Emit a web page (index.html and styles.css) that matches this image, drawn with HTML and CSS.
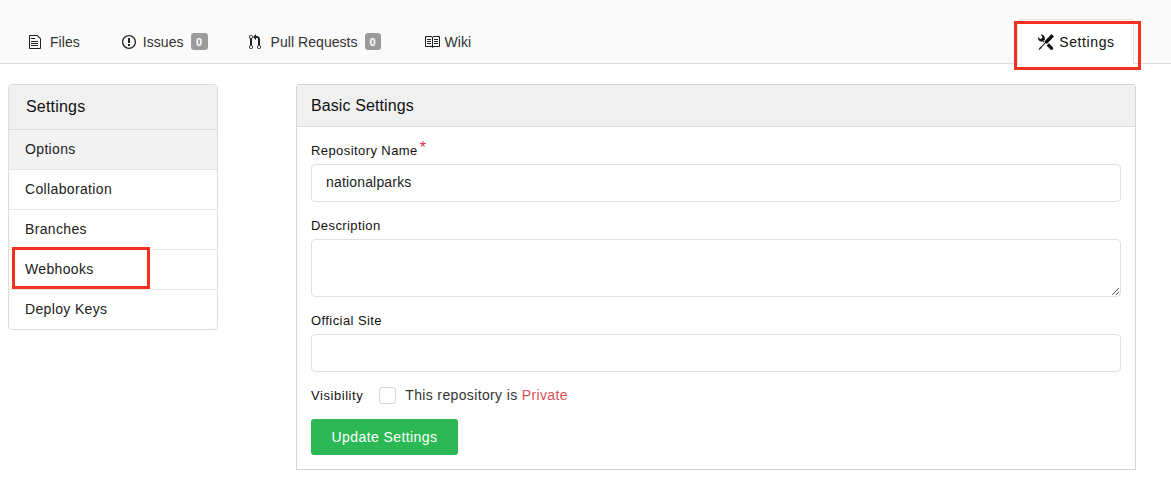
FILE: index.html
```html
<!DOCTYPE html>
<html lang="en">
<head>
<meta charset="utf-8">
<title>Settings</title>
<link rel="stylesheet" href="styles.css">
</head>
<body>
<nav class="tabs">
  <a class="tab tab-files">
    <svg class="ico" viewBox="0 0 12 16" width="12" height="16"><path d="M6 5H2V4h4v1zM2 8h7V7H2v1zm0 2h7V9H2v1zm0 2h7v-1H2v1zm10-7.500V14c0 .55-.45 1-1 1H1c-.55 0-1-.45-1-1V2c0-.55.45-1 1-1h7.500L12 4.500zM11 5L8 2H1v12h10V5z"/></svg>
    <span>Files</span>
  </a>
  <a class="tab tab-issues">
    <svg class="ico" viewBox="0 0 14 16" width="14" height="16"><path d="M7 2.300c3.140 0 5.700 2.560 5.700 5.700s-2.560 5.700-5.700 5.700A5.710 5.710 0 0 1 1.300 8c0-3.140 2.560-5.700 5.700-5.700zM7 1C3.140 1 0 4.140 0 8s3.140 7 7 7 7-3.140 7-7-3.140-7-7-7zm1 3H6v5h2V4zm0 6H6v2h2v-2z"/></svg>
    <span>Issues</span><b class="count count-issues">0</b>
  </a>
  <a class="tab tab-pulls">
    <svg class="ico" viewBox="0 0 12 16" width="12" height="16"><path d="M11 11.280V5c-.03-.78-.34-1.470-.94-2.060C9.460 2.350 8.780 2.030 8 2H7V0L4 3l3 3V4h1c.27.02.48.11.69.31.21.2.3.42.31.69v6.280A1.993 1.993 0 0 0 10 15a1.993 1.993 0 0 0 1-3.720zm-1 2.920c-.66 0-1.200-.55-1.200-1.200 0-.65.55-1.200 1.200-1.200.65 0 1.200.55 1.200 1.200 0 .65-.55 1.200-1.200 1.200zM4 3c0-1.110-.89-2-2-2a1.993 1.993 0 0 0-1 3.720v6.560A1.993 1.993 0 0 0 2 15a1.993 1.993 0 0 0 1-3.720V4.720c.59-.34 1-.98 1-1.720zm-.8 10c0 .66-.55 1.200-1.200 1.200-.65 0-1.200-.55-1.200-1.200 0-.65.55-1.200 1.200-1.200.65 0 1.200.55 1.200 1.200zM2 4.200C1.340 4.200.8 3.650.8 3c0-.65.55-1.200 1.200-1.200.65 0 1.200.55 1.200 1.200 0 .65-.55 1.200-1.200 1.200z"/></svg>
    <span>Pull Requests</span><b class="count">0</b>
  </a>
  <a class="tab tab-wiki">
    <svg class="ico" viewBox="0 0 16 16" width="16" height="16"><path d="M3 5h4v1H3V5zm0 3h4V7H3v1zm0 2h4V9H3v1zm11-5h-4v1h4V5zm0 2h-4v1h4V7zm0 2h-4v1h4V9zm2-6v9c0 .55-.45 1-1 1H9.500l-1 1-1-1H2c-.55 0-1-.45-1-1V3c0-.55.45-1 1-1h5.500l1 1 1-1H15c.55 0 1 .45 1 1zm-8 .5L7.500 3H2v9h6V3.500zm7-.5H9.500l-.5.5V12h6V3z"/></svg>
    <span>Wiki</span>
  </a>
  <a class="tab tab-settings">
    <svg class="ico" viewBox="0 0 16 16" width="16" height="16"><path d="M4.480 7.270c.26.26 1.280 1.330 1.280 1.330l.56-.58-.88-.91 1.690-1.800s-.76-.74-.43-.45c.32-1.190.03-2.510-.87-3.440C4.930.5 3.660.2 2.520.51l1.930 2-.51 1.960-1.890.52-1.930-2C-.19 4.170.1 5.480 1 6.400c.94.98 2.290 1.260 3.480.87zm6.440 1.940l-2.330 2.300 3.840 3.980c.31.33.73.49 1.140.49.41 0 .82-.16 1.140-.49.63-.65.63-1.700 0-2.350l-3.790-3.930zM16 2.530L13.550 0 6.330 7.460l.88.91-4.310 4.460-.99.53-1.390 2.270.35.37 2.200-1.440.51-1.020L7.900 9.080l.88.91L16 2.530z"/></svg>
    <span>Settings</span>
  </a>
</nav>

<main class="content">
  <aside class="side">
    <h4 class="side-head">Settings</h4>
    <a class="side-item active">Options</a>
    <a class="side-item">Collaboration</a>
    <a class="side-item">Branches</a>
    <a class="side-item">Webhooks</a>
    <a class="side-item">Deploy Keys</a>
  </aside>

  <section class="panel">
    <h4 class="panel-head">Basic Settings</h4>
    <form class="form">
      <div class="field field-name">
        <label class="lbl required">Repository Name</label>
        <input class="ctl" type="text" value="nationalparks">
      </div>
      <div class="field field-desc">
        <label class="lbl">Description</label>
        <textarea class="ctl area"></textarea>
      </div>
      <div class="field field-site">
        <label class="lbl">Official Site</label>
        <input class="ctl" type="text">
      </div>
      <div class="vis">
        <span class="lbl">Visibility</span>
        <span class="box"></span>
        <span class="vis-text">This repository is <em class="private">Private</em></span>
      </div>
      <button class="btn" type="button">Update Settings</button>
    </form>
  </section>
</main>

<div class="mark mark-settings"></div>
<div class="mark mark-hooks"></div>
</body>
</html>
```

FILE: styles.css
```css
* { box-sizing: border-box; }
html, body { margin: 0; height: 479px; overflow: hidden; }
body {
  position: relative;
  background: #fff;
  color: #212121;
  font-family: "Liberation Sans", Arial, sans-serif;
  font-size: 14px;
}
.tabs {
  height: 64px;
  padding: 19px 37px 0 29px;
  background: #fafafa;
  border-bottom: 1px solid #ddd;
  display: flex;
  align-items: flex-start;
}
.tab {
  height: 45px;
  display: flex;
  align-items: center;
  color: #333;
  letter-spacing: .05px;
}
.ico { flex: none; fill: #222; }
.tab-files { margin-right: 42px; }
.tab-files span { margin-left: 9px; }
.tab-issues { margin-right: 41px; }
.tab-issues span { margin-left: 7px; }
.tab-pulls { margin-right: 43px; }
.tab-pulls span { margin-left: 10px; }
.tab-wiki span { margin-left: 5px; }
.tab-settings {
  margin-left: auto;
  width: 117px;
  padding-left: 2px;
  justify-content: center;
  background: #fff;
  border: 1px solid #e2e2e2;
  border-bottom: 0;
  border-radius: 4px 4px 0 0;
  color: #111;
  letter-spacing: .6px;
}
.tab-settings span { margin-left: 5px; }
.tab-settings .ico { fill: #111; }
.count {
  margin-left: 7px;
  width: 16px;
  height: 17px;
  border-radius: 3px;
  background: #9b9b9b;
  color: #fff;
  font-size: 11px;
  font-weight: 700;
  display: flex;
  align-items: center;
  justify-content: center;
}
.count-issues { width: 17px; }
.content {
  display: flex;
  align-items: flex-start;
  gap: 78px;
  padding: 20px 35px 0 8px;
}
.side {
  width: 210px;
  flex: none;
  border: 1px solid #ddd;
  border-radius: 4px;
  overflow: hidden;
}
.side-head {
  margin: 0;
  height: 45px;
  padding: 0 0 1px 17px;
  display: flex;
  align-items: center;
  background: #f0f0f0;
  border-bottom: 1px solid #ddd;
  font-size: 16px;
  font-weight: 400;
  letter-spacing: .2px;
  color: #111;
}
.side-item {
  display: flex;
  align-items: center;
  height: 40px;
  padding: 0 0 1px 16px;
  border-bottom: 1px solid #e8e8e8;
  letter-spacing: .35px;
  color: #212121;
}
.side-item.active { background: #f3f3f3; }
.side-item:last-child { height: 39px; border-bottom: 0; }
.panel {
  flex: 1;
  height: 386px;
  border: 1px solid #d4d4d4;
  border-radius: 3px 3px 0 0;
}
.panel-head {
  margin: 0;
  height: 42px;
  padding-left: 14px;
  display: flex;
  align-items: center;
  background: #f0f0f0;
  border-bottom: 1px solid #ddd;
  font-size: 16px;
  font-weight: 400;
  letter-spacing: .1px;
  color: #111;
}
.form { padding: 14px 14px 0; }
.field { display: block; }
.lbl {
  display: block;
  height: 23px;
  font-size: 13px;
  line-height: 18px;
  letter-spacing: .42px;
  color: #111;
}
.field-desc .lbl, .field-site .lbl { padding-top: 1px; }
.field-desc, .field-site { margin-top: 14px; }
.required::after {
  content: "*";
  color: #d9333f;
  font-size: 16px;
  margin-left: 2px;
  position: relative;
  top: -2px;
}
.ctl {
  display: block;
  width: 100%;
  height: 38px;
  margin: 0;
  padding: 0 14px 2px;
  border: 1px solid #e0e0e0;
  border-radius: 4px;
  background: #fff;
  font-family: inherit;
  font-size: 14px;
  letter-spacing: .17px;
  color: #222;
  outline: 0;
}
.area { height: 58px; padding-top: 8px; resize: vertical; }
.vis {
  display: flex;
  align-items: center;
  height: 17px;
  margin-top: 15px;
}
.vis .lbl { height: auto; margin-right: 16px; letter-spacing: .55px; }
.box {
  width: 17px;
  height: 17px;
  border: 1px solid #d4d4d4;
  border-radius: 3px;
  background: #fff;
  margin-right: 9px;
}
.vis-text { color: #333; letter-spacing: .36px; padding-bottom: 1px; }
.private { color: #db5059; font-style: normal; }
.btn {
  display: block;
  width: 147px;
  height: 36px;
  margin-top: 15px;
  padding: 0;
  border: 0;
  border-radius: 3px;
  background: #2cb955;
  color: #fff;
  font-family: inherit;
  font-size: 14px;
  font-weight: 400;
  letter-spacing: .42px;
}
.mark {
  position: absolute;
  border: 3px solid #f4301f;
  pointer-events: none;
}
.mark-settings { left: 1014px; top: 21px; width: 127px; height: 49px; }
.mark-hooks { left: 12px; top: 247px; width: 138px; height: 42px; }
```
